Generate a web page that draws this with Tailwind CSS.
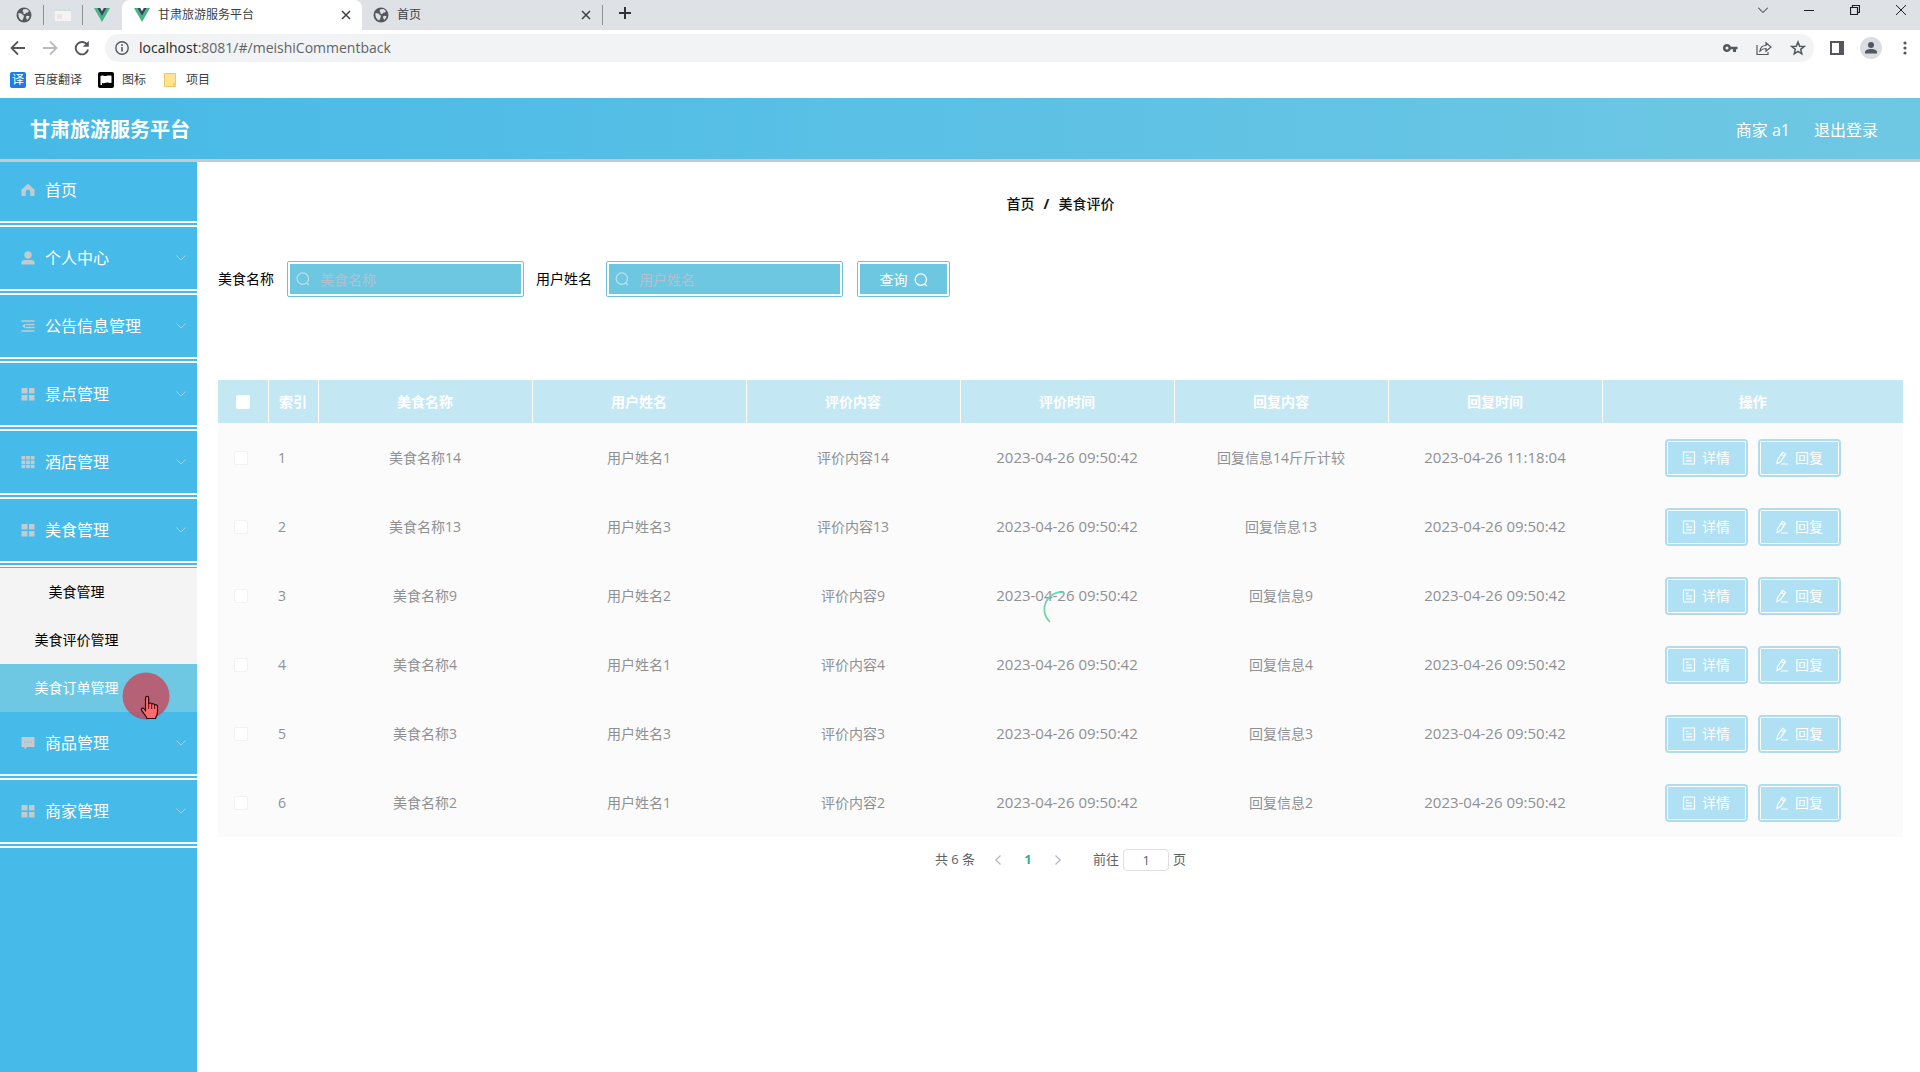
<!DOCTYPE html>
<html lang="zh-CN">
<head>
  <meta charset="UTF-8" />
  <meta name="viewport" content="width=device-width, initial-scale=1.0"/>
  <title>甘肃旅游服务平台</title>
  <script src="https://cdn.jsdelivr.net/npm/@tailwindcss/browser@4"></script>
</head>
<body class="min-h-screen flex flex-col bg-white text-black font-['Open_Sans','Noto_Sans_CJK_SC',sans-serif]">

  <!-- Shared icons -->
  <svg class="hidden">
    <symbol id="i-globe" viewBox="0 0 16 16"><circle cx="8" cy="8" r="7.5" fill="#54575c"/><path d="M2.500 6l3 .6 1.500 1.700 1 .3-.4 2-1.300 2.900C3.500 12.500 2 9.500 2.500 6zM7.500 2.300l3-.3 2.500 2-1 1.500-2 .2-.8 1.600-2-.8.300-1.500-1.200-.8zM9.800 9.500l2-.8 1.700.5c-.4 1.800-1.300 2.900-2.500 3.700z" fill="#dee1e6"/></symbol>
    <symbol id="i-vue" viewBox="0 0 16 14"><path d="M0 0h3.200L8 8.300 12.800 0H16L8 14z" fill="#41b883"/><path d="M3.200 0h3L8 3.200 9.800 0h3L8 8.300z" fill="#35495e"/></symbol>
    <symbol id="i-x" viewBox="0 0 10 10"><path d="M1 1l8 8M9 1l-8 8" fill="none" stroke="currentColor" stroke-width="1.500"/></symbol>
    <symbol id="i-down" viewBox="0 0 10 6"><path d="M.5.500L5 5 9.500.500" fill="none" stroke="currentColor"/></symbol>
    <symbol id="i-home" viewBox="0 0 14 14"><path d="M7 .8L.5 6.500V13h4.300V9a2.200 2.200 0 0 1 4.400 0v4h4.300V6.500z" fill="currentColor"/></symbol>
    <symbol id="i-user" viewBox="0 0 14 14"><circle cx="7" cy="4" r="3.700" fill="currentColor"/><path d="M.5 13.500v-2C.5 9.800 2 9 4 9h6c2 0 3.500.8 3.500 2.500v2z" fill="currentColor"/></symbol>
    <symbol id="i-fold" viewBox="0 0 14 14"><path d="M.5 2h13M4.500 5.500h9M4.500 8.500h9M.5 12h13" stroke="currentColor" stroke-width="1.500"/><path d="M1 7l3-2.200v4.400z" fill="currentColor"/></symbol>
    <symbol id="i-menu" viewBox="0 0 14 14"><path d="M.5 1h6v5.500h-6zM8 1h5.500v5.500H8zM.5 8h6v5.500h-6zM8 8h5.500v5.500H8z" fill="currentColor"/></symbol>
    <symbol id="i-grid" viewBox="0 0 14 14"><path d="M.5 1h3.800v3.600H.5zM5.100 1h3.800v3.600H5.100zM9.700 1h3.800v3.600H9.700zM.5 5.400h3.800V9H.5zM5.100 5.400h3.800V9H5.100zM9.700 5.400h3.800V9H9.700zM.5 9.800h3.800v3.500H.5zM5.100 9.800h3.800v3.500H5.100zM9.700 9.800h3.800v3.500H9.700z" fill="currentColor"/></symbol>
    <symbol id="i-chat" viewBox="0 0 14 14"><path d="M.5 1h13v10H6l-2.500 2.500V11h-3z" fill="currentColor"/><path d="M3.200 5.500h1.300v1.300H3.200zM6.300 5.500h1.300v1.300H6.300zM9.400 5.500h1.300v1.300H9.400z" fill="#7dbfdf"/></symbol>
    <symbol id="i-search" viewBox="0 0 14 14"><circle cx="6.800" cy="6.600" r="5.700" fill="none" stroke="currentColor" stroke-width="1.200"/><path d="M10.600 10.800l2.200 2.200" stroke="currentColor" stroke-width="1.200"/></symbol>
    <symbol id="i-doc" viewBox="0 0 14 14"><path d="M1.500 1h11v12h-11zM4 4.300h2.500M4 7h6M4 9.800h6" fill="none" stroke="currentColor" stroke-width="1.200"/></symbol>
    <symbol id="i-edit" viewBox="0 0 14 14"><path d="M2 12.500l.6-3.800L7.500 1.300l3 2-4.900 7.400zM6.300 3.200l3 2M6 13h7" fill="none" stroke="currentColor" stroke-width="1.200"/></symbol>
  </svg>

  <!-- Tab strip -->
  <div class="h-[30px] flex items-center bg-[#dee1e6] text-xs text-[#3c4043]">
    <div class="w-[122px] flex items-center justify-between pl-4 pr-3">
      <svg class="size-4"><use href="#i-globe"/></svg>
      <span class="w-px h-5 bg-[#8e9196]"></span>
      <svg class="w-4 h-3.5" viewBox="0 0 16 14"><path d="M0 1h16v12H0z" fill="#f4f4f2"/><path d="M0 1h16v2H0z" fill="#cfe3dc"/><path d="M2 6h5v5H2z" fill="#ece6e2"/></svg>
      <span class="w-px h-5 bg-[#8e9196]"></span>
      <svg class="w-4 h-3.5"><use href="#i-vue"/></svg>
    </div>
    <div class="w-60 h-full flex items-center gap-2 bg-white rounded-t-lg pl-3 pr-[11px]">
      <svg class="w-4 h-3.5"><use href="#i-vue"/></svg>
      <span class="flex-1">甘肃旅游服务平台</span>
      <button aria-label="关闭" class="flex"><svg class="size-2.5"><use href="#i-x"/></svg></button>
    </div>
    <div class="w-60 flex items-center gap-2 pl-[11px] pr-[11px]">
      <svg class="size-4"><use href="#i-globe"/></svg>
      <span class="flex-1">首页</span>
      <button aria-label="关闭" class="flex"><svg class="size-2.5"><use href="#i-x"/></svg></button>
    </div>
    <span class="w-px h-5 bg-[#8e9196]"></span>
    <button aria-label="新标签页" class="ml-4 pb-1"><svg class="size-3" viewBox="0 0 12 12"><path d="M6 0v12M0 6h12" stroke="#303236" stroke-width="2"/></svg></button>
    <div class="ml-auto flex items-start gap-9 pr-3.5 pb-2.5 text-[#1d1f22]">
      <button aria-label="搜索标签页"><svg class="w-2.5 h-2.5" viewBox="0 0 10 10"><path d="M0 2.500l5 5 5-5" fill="none" stroke="currentColor"/></svg></button>
      <button aria-label="最小化"><svg class="w-2.5 h-2.5" viewBox="0 0 10 10"><path d="M0 5.500h10" stroke="currentColor"/></svg></button>
      <button aria-label="还原"><svg class="w-2.5 h-2.5" viewBox="0 0 10 10"><path d="M.5 2.500h7v7h-7zM2.500 2.500v-2h7v7h-2" fill="none" stroke="currentColor" stroke-width="1.200"/></svg></button>
      <button aria-label="关闭窗口"><svg class="w-2.5 h-2.5" viewBox="0 0 10 10"><path d="M0 0l10 10M10 0L0 10" stroke="currentColor"/></svg></button>
    </div>
  </div>

  <!-- Address bar -->
  <div class="h-9 flex items-center text-[#54575c]">
    <div class="w-[105px] flex items-center gap-4 pl-2.5">
      <button aria-label="后退"><svg class="size-4" viewBox="0 0 16 16"><path d="M15 8H2M8 1.500L1.500 8 8 14.500" fill="none" stroke="currentColor" stroke-width="1.800"/></svg></button>
      <button aria-label="前进" class="text-[#b9bbbe]"><svg class="size-4" viewBox="0 0 16 16"><path d="M1 8h13M8 1.500L14.500 8 8 14.500" fill="none" stroke="currentColor" stroke-width="1.800"/></svg></button>
      <button aria-label="刷新"><svg class="size-4" viewBox="0 0 16 16"><path d="M13.300 5A6.200 6.200 0 1 0 14 9.500" fill="none" stroke="currentColor" stroke-width="1.900"/><path d="M14.800.8v6H8.800z" fill="currentColor"/></svg></button>
    </div>
    <div class="flex-1 h-7 flex items-center gap-[18px] bg-[#f1f3f4] rounded-full pl-2.5 pr-2">
      <svg class="size-3.5" viewBox="0 0 14 14"><circle cx="7" cy="7" r="6.200" fill="none" stroke="currentColor" stroke-width="1.400"/><path d="M7 6v4.500M7 3.300v1.600" stroke="currentColor" stroke-width="1.600"/></svg>
      <div class="flex-1 -ml-2 text-sm leading-6 text-[#5f6368]"><span class="text-[#26282b]">localhost</span>:8081/#/meishiCommentback</div>
      <svg class="w-4 h-4" viewBox="0 0 16 16"><path d="M5 4a4 4 0 1 0 3.800 5.200H11V12h3V9.200h1.500V6.800H8.800A4 4 0 0 0 5 4zm0 2.500a1.500 1.500 0 1 1 0 3 1.500 1.500 0 0 1 0-3z" fill="currentColor" fill-rule="evenodd"/></svg>
      <svg class="w-4 h-4" viewBox="0 0 16 16"><path d="M1 5v9.500h11V12M4 11c.3-3.800 2.500-5.500 6-5.500V2.800L15 7l-5 4.200V8.500C7.500 8.500 5.500 9.200 4 11z" fill="none" stroke="currentColor" stroke-width="1.200"/></svg>
      <svg class="w-4 h-4" viewBox="0 0 16 16"><path d="M8 2l1.700 4.200 4.500.3-3.500 2.900 1.100 4.400L8 11.400l-3.800 2.400 1.100-4.400L1.800 6.500l4.500-.3z" fill="none" stroke="currentColor" stroke-width="1.500"/></svg>
    </div>
    <div class="flex items-center gap-4 pl-4 pr-2.5">
      <svg class="size-3.5" viewBox="0 0 14 14"><path d="M1 1h12v12H1z" fill="none" stroke="currentColor" stroke-width="2"/><path d="M9 1h4v12H9z" fill="currentColor"/></svg>
      <svg class="size-[22px]" viewBox="0 0 22 22"><circle cx="11" cy="11" r="11" fill="#dadde3"/><circle cx="11" cy="8" r="3" fill="currentColor"/><path d="M5 16.500v-1.500c0-2 3-3 6-3s6 1 6 3v1.500z" fill="currentColor"/></svg>
      <svg class="w-3 h-4" viewBox="0 0 12 16"><g fill="currentColor"><circle cx="7" cy="3" r="1.600"/><circle cx="7" cy="8" r="1.600"/><circle cx="7" cy="13" r="1.600"/></g></svg>
    </div>
  </div>

  <!-- Bookmarks -->
  <div class="h-8 flex items-center gap-4 pb-1 pl-2.5 text-xs text-[#3c4043]">
    <a href="#" class="flex items-center gap-2"><span class="size-4 rounded-xs bg-[#1a7de8] text-white text-center leading-4">译</span>百度翻译</a>
    <a href="#" class="flex items-center gap-2"><svg class="size-4" viewBox="0 0 16 16"><rect width="16" height="16" rx="2" fill="#000"/><path d="M2.500 13V4c2-1.500 3.500.5 5.500 0s3.500-.5 5.500-.2v7c-2 .4-3.500-.6-5.500 0s-2.500.4-4 .2v2z" fill="#fff"/></svg>图标</a>
    <a href="#" class="flex items-center gap-2"><svg class="size-4" viewBox="0 0 16 16"><path d="M2.500 1.500h11v13h-11z" fill="#fde492" stroke="#efc95a"/><path d="M11 11h3v4h-3z" fill="#f5cf62"/></svg>项目</a>
  </div>

  <!-- Header -->
  <header class="h-16 flex items-center justify-between border-b-3 border-[#c4cacd] bg-linear-to-r from-[#45b9e7] to-[#6fc8e3] pt-0.5 pl-[30px] pr-[42px] text-white">
    <h1 class="text-xl font-bold">甘肃旅游服务平台</h1>
    <div class="flex gap-6 text-base">
      <span>商家 a1</span>
      <a href="#">退出登录</a>
    </div>
  </header>

  <div class="flex-1 flex">
    <!-- Sidebar -->
    <nav class="w-[197px] shrink-0 bg-[#46bae8] text-base text-white">
      <a href="#" class="h-[65px] flex items-center gap-2.5 border-b-6 border-double border-white pb-1 pl-[21px]"><svg class="size-3.5 text-[#c4cacf]"><use href="#i-home"/></svg>首页</a>
      <div id="menuTop"></div>
      <div class="border-t border-[#46bae8] bg-[#f4f4f4] text-sm text-black">
        <a href="#" class="h-12 flex items-center justify-center pr-11">美食管理</a>
        <a href="#" class="h-12 flex items-center justify-center pr-11">美食评价管理</a>
        <a href="#" class="relative h-12 flex items-center justify-center pr-11 bg-[#6fc8e3] text-white">美食订单管理
          <svg class="absolute left-[122px] top-2 size-12 z-10" viewBox="0 0 48 48">
            <circle cx="24" cy="24" r="23.500" fill="#c8485a" fill-opacity=".8"/>
            <path d="M23.500 26c0-2.200 3.200-2.200 3.200 0v6c.5-1.500 3-1.300 3 .4.600-1.200 2.900-.9 2.900.8.800-1 2.900-.5 2.900 1.300V40c0 3-1.500 4-2 6.500h-8.500c-.8-3-4.500-6-5.500-8.500-.7-1.900 1.500-2.500 2.700-1l1.300 1.600z" fill="#ff6b6b" stroke="#2a0a10" stroke-width="1.200"/>
            <path d="M29.700 32.500V37M32.600 33.500V37M26.700 32v5" stroke="#5a1018"/>
          </svg>
        </a>
      </div>
      <div id="menuBottom"></div>
    </nav>

    <!-- Content -->
    <main class="flex-1 pl-[21px] pr-[17px]">
      <div class="pt-8 flex justify-center gap-[9px] text-sm text-[#111] font-medium">
        <a href="#">首页</a><span class="font-bold">/</span><span>美食评价</span>
      </div>

      <form class="mt-[47px] flex items-center text-sm">
        <label for="foodName">美食名称</label>
        <div class="relative ml-[13px] w-[237px] h-9 border border-[#6fc0da] rounded-xs p-0.5">
          <input id="foodName" type="text" placeholder="美食名称" class="block w-full h-full bg-[#6ec7e1] pl-[30px] placeholder:text-[#b5bfcb]" />
          <svg class="absolute left-2 top-2.5 size-3.5 text-[#c0dfec]"><use href="#i-search"/></svg>
        </div>
        <label for="userName" class="ml-3">用户姓名</label>
        <div class="relative ml-3.5 w-[237px] h-9 border border-[#6fc0da] rounded-xs p-0.5">
          <input id="userName" type="text" placeholder="用户姓名" class="block w-full h-full bg-[#6ec7e1] pl-[30px] placeholder:text-[#b5bfcb]" />
          <svg class="absolute left-2 top-2.5 size-3.5 text-[#c0dfec]"><use href="#i-search"/></svg>
        </div>
        <button type="button" class="ml-3.5 w-[93px] h-9 border border-[#6fc0da] rounded-xs p-0.5 text-white">
          <span class="h-full flex items-center justify-center gap-1.5 bg-[#6ec7e1] pt-0.5">查询<svg class="size-3.5"><use href="#i-search"/></svg></span>
        </button>
      </form>

      <!-- Comment table with loading spinner -->
      <div class="relative mt-[83px]">
        <table class="w-full table-fixed text-sm text-[#8f9092]">
          <colgroup><col class="w-[50px]"><col class="w-[50px]"><col><col><col><col><col><col><col class="w-[301px]"></colgroup>
          <thead>
            <tr class="h-[43px] bg-[#c4e8f3] text-white">
              <th class="border-r border-white"><input type="checkbox" aria-label="全选" class="block mx-auto size-3.5 appearance-none rounded-xs bg-white" /></th>
              <th class="border-r border-white">索引</th>
              <th class="border-r border-white">美食名称</th>
              <th class="border-r border-white">用户姓名</th>
              <th class="border-r border-white">评价内容</th>
              <th class="border-r border-white">评价时间</th>
              <th class="border-r border-white">回复内容</th>
              <th class="border-r border-white">回复时间</th>
              <th>操作</th>
            </tr>
          </thead>
          <tbody id="commentRows"></tbody>
        </table>
        <svg class="absolute left-1/2 top-1/2 size-[42px] -translate-x-1/2 -translate-y-1/2" viewBox="0 0 42 42"><path d="M23 4.300A17 17 0 0 0 9.500 33.500" fill="none" stroke="#6fd3ab" stroke-width="1.700" stroke-linecap="round"/></svg>
      </div>

      <!-- Pagination -->
      <div class="mt-3 flex items-center justify-center text-[13px] text-[#606266]">
        <span>共 6 条</span>
        <button aria-label="上一页" class="ml-5"><svg class="w-1.5 h-2.5 text-[#b4b8bf]" viewBox="0 0 6 10"><path d="M5.500.500L1 5l4.500 4.500" fill="none" stroke="currentColor" stroke-width="1.300"/></svg></button>
        <button class="w-[54px] font-bold text-[#2bb585]">1</button>
        <button aria-label="下一页"><svg class="w-1.5 h-2.5 text-[#b4b8bf]" viewBox="0 0 6 10"><path d="M.5.500L5 5 .5 9.500" fill="none" stroke="currentColor" stroke-width="1.300"/></svg></button>
        <label for="pageNo" class="ml-8">前往</label>
        <input id="pageNo" type="text" value="1" class="mx-1 w-[46px] h-[22px] border border-[#dcdfe6] rounded text-center" />
        <span>页</span>
      </div>
    </main>
  </div>

  <script>
    const topItems = [
      ["user", "个人中心"], ["fold", "公告信息管理"], ["menu", "景点管理"], ["grid", "酒店管理"], ["menu", "美食管理"],
    ];
    const bottomItems = [["chat", "商品管理"], ["menu", "商家管理"]];

    const rows = [
      ["14", "1", "11:18:04", "14斤斤计较"],
      ["13", "3", "09:50:42", "13"],
      ["9", "2", "09:50:42", "9"],
      ["4", "1", "09:50:42", "4"],
      ["3", "3", "09:50:42", "3"],
      ["2", "1", "09:50:42", "2"],
    ];

    function menuItem([icon, name]) {
      return `
        <a href="#" class="h-[68px] flex items-center gap-2.5 border-b-6 border-double border-white pl-[21px] pr-[11px]">
          <svg class="size-3.5 text-[#c4cacf]"><use href="#i-${icon}"/></svg>
          <span class="flex-1">${name}</span>
          <svg class="w-2.5 h-1.5 text-[#a5d4ea]"><use href="#i-down"/></svg>
        </a>`;
    }

    function actionButton(icon, name) {
      return `
        <button class="w-[83px] h-[38px] border-2 border-[#b0dcee] rounded-sm bg-white p-px text-white">
          <span class="h-full flex items-center justify-center gap-1.5 bg-[#b0e0f3]"><svg class="size-3.5"><use href="#i-${icon}"/></svg>${name}</span>
        </button>`;
    }

    document.getElementById("menuTop").innerHTML = topItems.map(menuItem).join("");
    document.getElementById("menuBottom").innerHTML = bottomItems.map(menuItem).join("");

    document.getElementById("commentRows").innerHTML = rows.map(([id, user, time, reply], i) => `
      <tr class="h-[69px] bg-[#fbfbfc] text-center">
        <td><input type="checkbox" aria-label="选择第${i + 1}行" class="block ml-4 size-3.5 appearance-none rounded-xs border border-[#f1f2f5] bg-white" /></td>
        <td class="pl-2.5 text-left">${i + 1}</td>
        <td>美食名称${id}</td>
        <td>用户姓名${user}</td>
        <td>评价内容${id}</td>
        <td class="text-[15px]">2023-04-26 09:50:42</td>
        <td>回复信息${reply}</td>
        <td class="text-[15px]">2023-04-26 ${time}</td>
        <td><div class="flex justify-center gap-2.5">${actionButton("doc", "详情")}${actionButton("edit", "回复")}</div></td>
      </tr>`).join("");
  </script>
</body>
</html>
